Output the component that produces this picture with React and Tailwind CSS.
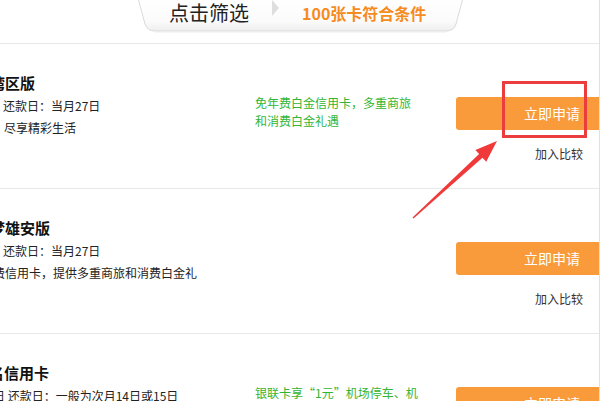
import React from "react";

const rows = [
  {
    title: "大湾区版",
    titleShift: "ml-[-25px]",
    repay: "还款日：当月27日",
    repayShift: "ml-[3px]",
    desc: "尽享精彩生活",
    descShift: "ml-[4px]",
    green: ["免年费白金信用卡，多重商旅", "和消费白金礼遇"],
  },
  {
    title: "梦雄安版",
    titleShift: "ml-[-10px]",
    repay: "还款日：当月27日",
    repayShift: "ml-[3px]",
    desc: "费信用卡，提供多重商旅和消费白金礼",
    descShift: "ml-[-7px]",
    green: [],
  },
  {
    title: "名信用卡",
    titleShift: "ml-[-11px]",
    repay: "日 还款日：一般为次月14日或15日",
    repayShift: "ml-[-7px]",
    desc: "",
    descShift: "",
    green: ["银联卡享“1元”机场停车、机"],
  },
];

function CardRow({ row }) {
  return (
    <div className="h-[145px] border-b border-[#e8e8e8] flex shrink-0">
      <div className="w-[255px] pt-[29px] flex flex-col whitespace-nowrap">
        <div className={`text-[15px] leading-[20px] font-bold text-[#111] ${row.titleShift}`}>
          {row.title}
        </div>
        <div className={`mt-[5px] text-[12px] leading-[16px] text-[#222] ${row.repayShift}`}>
          {row.repay}
        </div>
        {row.desc && (
          <div className={`mt-[6px] text-[12px] leading-[16px] text-[#222] ${row.descShift}`}>
            {row.desc}
          </div>
        )}
      </div>
      <div className="pt-[50px] text-[12px] leading-[18px] text-[#33b533] whitespace-nowrap">
        {row.green.map((g, i) => (
          <div key={i}>{g}</div>
        ))}
      </div>
      <div className="ml-auto w-[143px] pt-[53px] flex flex-col">
        <button className="h-[33px] w-[143px] rounded-l-[3px] bg-[#fa9b3b] text-white text-[14px] text-left pl-[68px] leading-[33px]">
          立即申请
        </button>
        <div className="mt-[16px] ml-[79px] text-[12px] leading-[16px] text-[#333]">加入比较</div>
      </div>
    </div>
  );
}

export default function App() {
  return (
    <div
      className="relative w-[601px] h-[401px] overflow-hidden bg-white flex"
      style={{ fontFamily: '"Noto Sans CJK SC", "Noto Sans", sans-serif' }}
    >
      <div className="w-[599px] flex flex-col">
        {/* filter tab */}
        <div className="h-[44px] border-b border-[#e8e8e8] shrink-0">
          <div className="relative ml-[137px] w-[327px] h-[33px]">
            <svg className="absolute inset-0" width="327" height="33" viewBox="0 0 327 33">
              <defs>
                <linearGradient id="tabg" x1="0" y1="0" x2="0" y2="1">
                  <stop offset="0" stopColor="#ffffff" />
                  <stop offset="0.7" stopColor="#fbfbfb" />
                  <stop offset="1" stopColor="#eeeeee" />
                </linearGradient>
              </defs>
              <path
                d="M1,-2 L8,24 Q10,31 18,31 L309,31 Q317,31 319,24 L326,-2"
                fill="url(#tabg)"
                stroke="#dadada"
                strokeWidth="1"
              />
              <path d="M18,32 L309,32" stroke="#ececec" strokeWidth="1" />
            </svg>
            <div className="relative h-[26px] flex items-center pl-[32px] whitespace-nowrap">
              <span className="text-[20px] leading-[24px] text-[#222]">点击筛选</span>
              <svg className="ml-[23px] self-start" width="8" height="16" viewBox="0 0 8 16">
                <path d="M0,0 L7,8 L0,16 Z" fill="#dedede" />
              </svg>
              <span className="ml-[22px] text-[16px] leading-[20px] font-bold text-[#f68b1f]">
                100张卡符合条件
              </span>
            </div>
          </div>
        </div>
        {rows.map((r, i) => (
          <CardRow key={i} row={r} />
        ))}
      </div>
      <div className="w-[2px] border-l border-[#e0e0e0]" />

      {/* red highlight box */}
      <div className="absolute left-[502px] top-[81px] w-[85px] h-[57px] border-[3px] border-[#eb3d3d]" />

      {/* red arrow */}
      <svg className="absolute left-0 top-0 pointer-events-none" width="601" height="401" viewBox="0 0 601 401">
        <polygon
          points="412.5,217.5 479.1,154.1 475.4,150.0 497,141 486.2,161.8 482.5,157.7 413.5,218.5"
          fill="#f03a3a"
        />
      </svg>
    </div>
  );
}
